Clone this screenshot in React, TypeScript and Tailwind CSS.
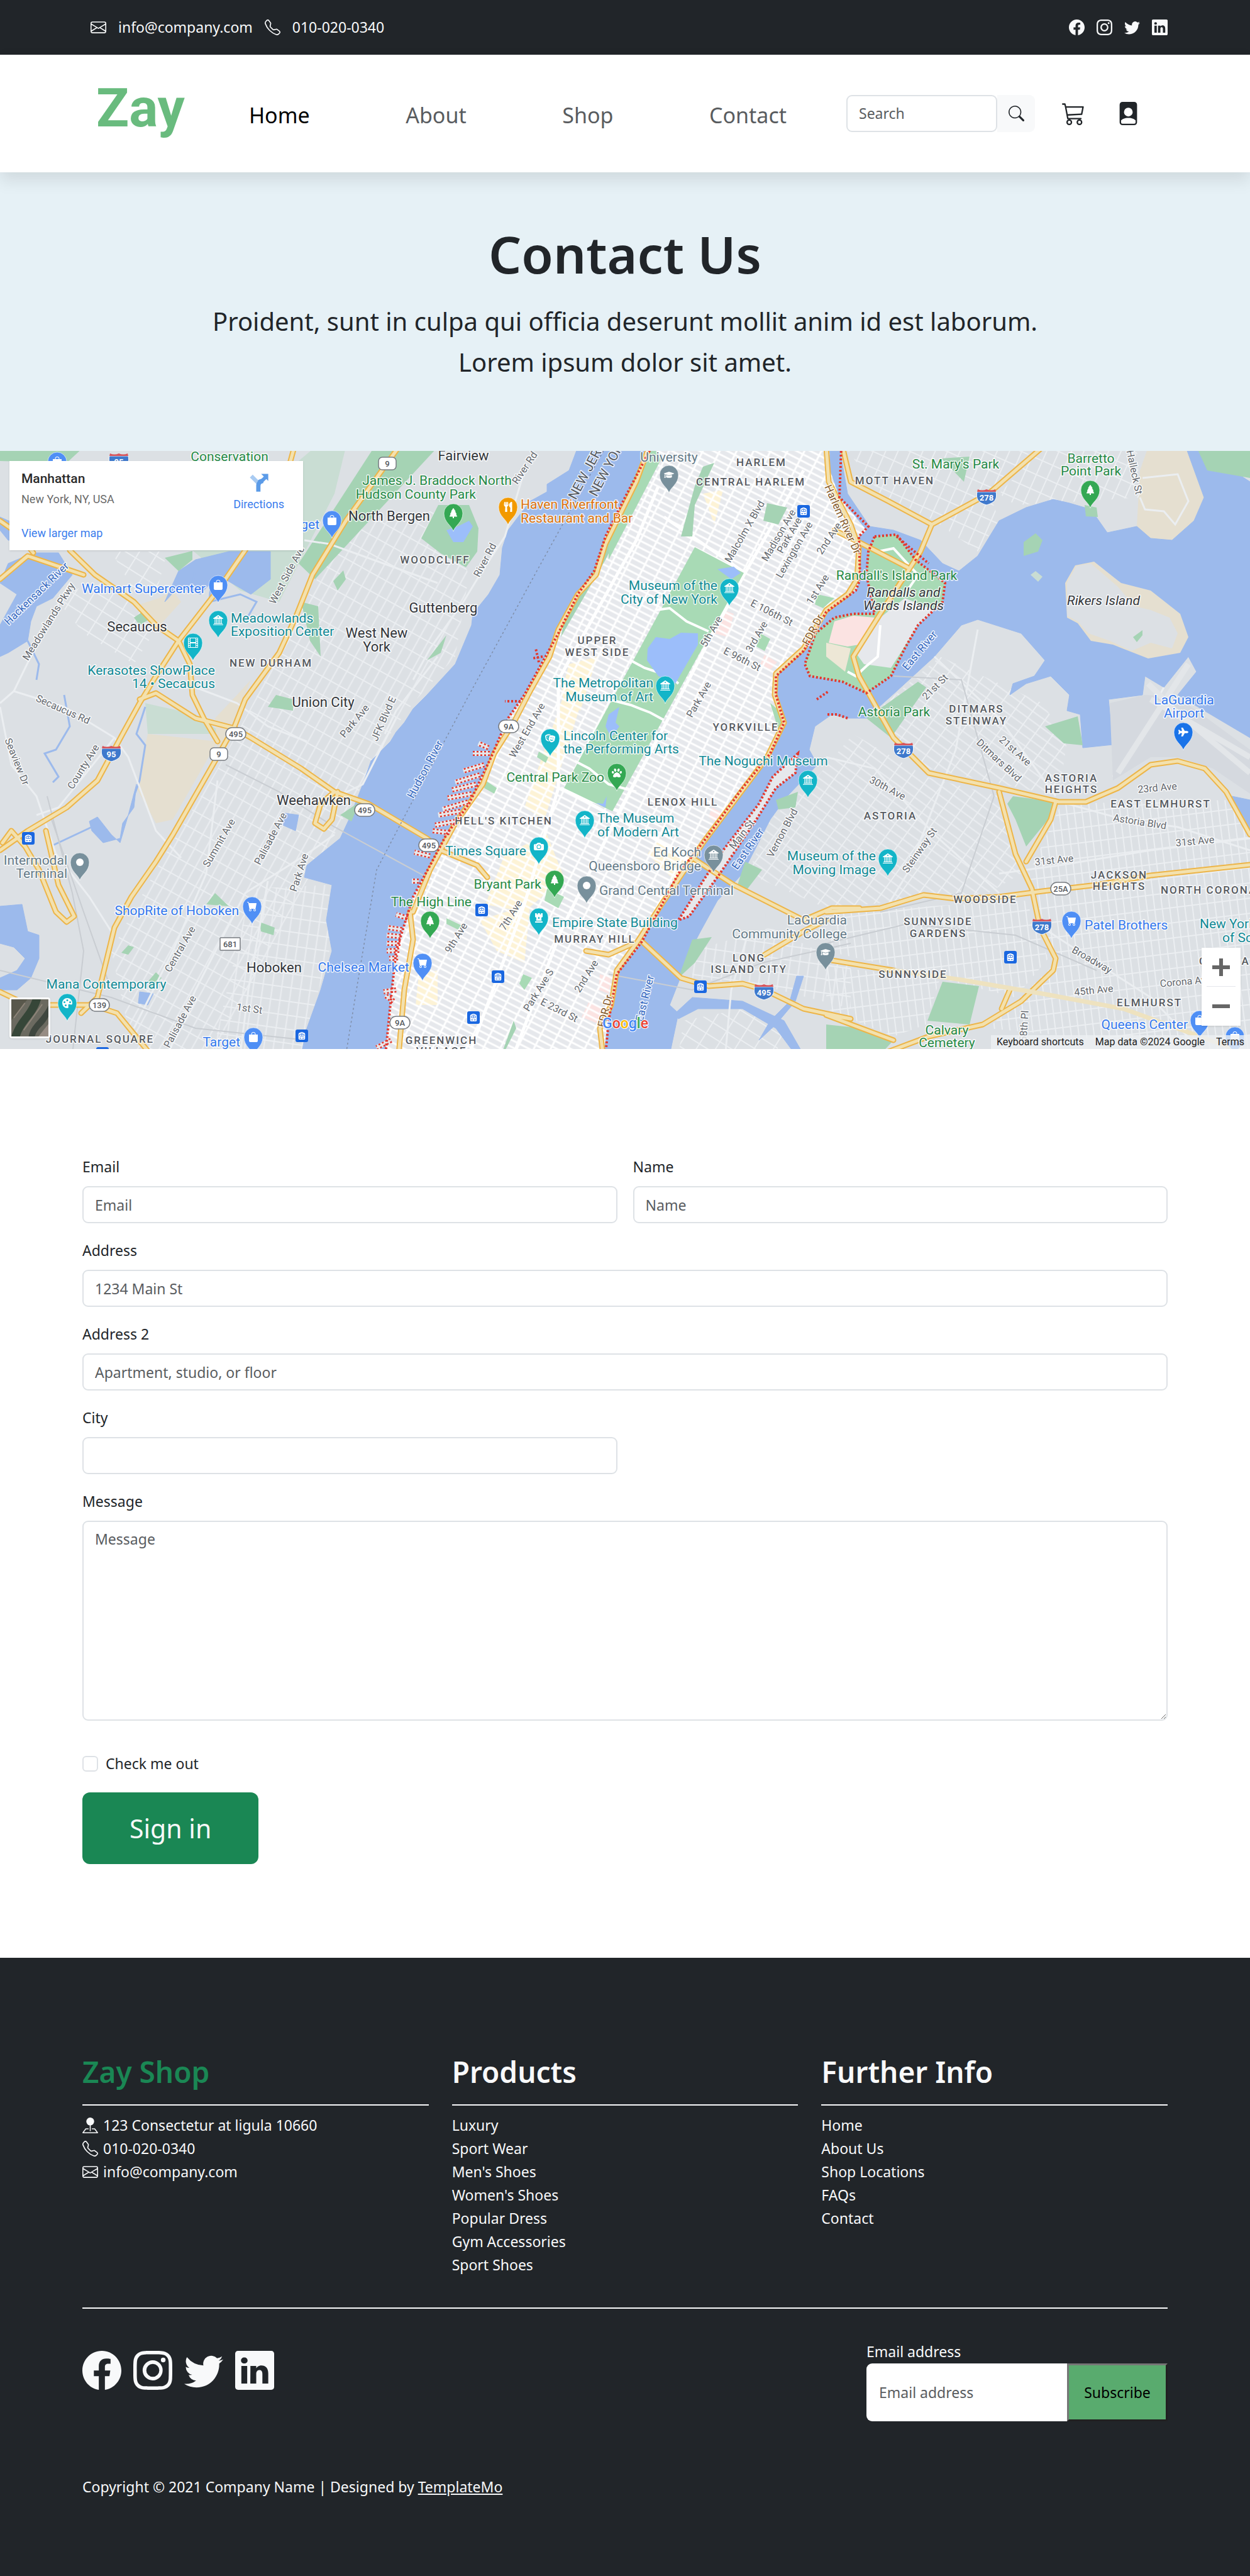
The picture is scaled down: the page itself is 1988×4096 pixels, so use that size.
import React from "react";
import {
  BsBagFill, BsBank2, BsCameraFill, BsCart3, BsCartFill, BsEnvelope, BsFacebook, BsFilePersonFill,
  BsFilm, BsInstagram, BsLinkedin, BsPaletteFill, BsPinMapFill, BsSearch, BsTelephone, BsTrainFrontFill, BsTreeFill,
  BsTwitter,
} from "react-icons/bs";
import { FaChessRook, FaGraduationCap, FaPaw, FaPlane, FaTheaterMasks, FaUtensils } from "react-icons/fa";

/* ---------- Map ---------- */

// The map is described in three survey sheets: west (w), centre (c) and east (e).
const SHEETS: Record<string, [number, number]> = { w: [0, 0.4437], c: [657, 0.4437], e: [1314, 0.4299] };

function place(sheet: string, x: number, y: number): [number, number] {
  const [origin, scale] = SHEETS[sheet];
  return [Math.round(origin + x * scale), Math.round(y * 0.6162 - 6)];
}

function line(source: string) {
  let sheet = "w";
  const out: string[] = [];
  for (const token of source.split(" ")) {
    if (token in SHEETS) sheet = token;
    else {
      const [x, y] = token.split(",").map(Number);
      out.push(place(sheet, x, y).join(","));
    }
  }
  return out.join(" ");
}

const WATER = [
  "c 590,0 560,60 480,95 480,115 420,140 340,215 320,260 310,330 270,380 215,430 210,460 150,560 100,600 50,640 0,675 w 1450,710 1420,735 1400,760 1330,810 1300,870 1250,960 1220,1010 1150,1050 1100,1080 1090,1110 1190,1130 1170,1220 1190,1300 1150,1400 1100,1500 1080,1568 c -100,1568 -80,1420 -60,1300 0,1160 60,1080 120,1000 200,920 280,800 340,700 400,640 460,560 520,480 590,380 650,320 690,230 760,130 860,0",
  "e 12,0 15,60 50,130 150,215 120,230 125,340 110,370 0,425 c 1470,440 1400,525 1300,590 1300,640 1330,710 1280,790 1180,880 1050,1010 950,1100 820,1275 730,1360 700,1480 680,1568 920,1568 950,1460 920,1440 1000,1290 1030,1250 1090,1170 1180,1100 1280,960 1340,900 1450,820 1420,780 1440,720 1500,690 e 80,700 150,700 260,630 400,540 500,460 560,445 720,480 810,550 770,590 690,610 680,640 740,610 830,590 900,640 890,680 940,690 950,775 1060,768 1045,650 1170,640 1180,590 1250,620 1340,540 1370,580 1300,640 1568,750 1568,90 1370,0 1330,0 1397,130 1360,190 1280,240 1200,235 1150,205 1040,220 980,160 900,145 840,135 740,155 640,190 560,280 490,320 430,300 350,240 250,215 160,205 80,120 50,0",
  "w 0,460 60,380 0,350 30,300 120,272 210,272 260,330 190,390 130,410 110,450 100,500 30,530 0,540",
  "w 0,1185 80,1180 100,1250 140,1260 140,1320 110,1370 60,1400 0,1400 0,1370 60,1350 90,1320 50,1290 0,1280",
  "w 590,400 640,320 700,290 820,270 970,270 970,340 900,380 780,330 720,380 640,360",
  "w 320,965 350,955 400,1000 430,1020 460,950 490,870 480,930 440,970 430,1010 370,1020 330,990",
  "w 0,180 60,200 80,240 30,240 0,215",
  "w 1020,945 1070,950 1060,990 1015,975",
  "w 500,1405 550,1410 530,1440 495,1435",
  "c 940,1460 1000,1420 1180,1430 1330,1480 1400,1568 1370,1568 1300,1500 1180,1450 1020,1450 950,1475",
  "e 1500,900 1568,910 1568,1000",
  "c 1280,1480 1350,1430 1375,1365 1400,1365 1370,1430 1300,1490 1240,1530",
];

const PARKS = [
  "w 1340,0 1568,0 1130,340 1070,300",
  "c 30,235 90,150 200,150 235,210 230,270 190,310 100,275",
  "w 590,285 690,268 690,290 640,320",
  "w 1080,400 1140,410 1150,540 1110,500",
  "w 990,640 1050,650 1050,680 960,670",
  "w 1195,345 1230,318 1240,340 1210,370",
  "w 740,1180 770,1150 820,1185",
  "w 930,1225 985,1240 980,1260 935,1250",
  "w 0,0 300,0 240,40 0,36",
  "w 480,440 510,425 535,445 500,460",
  "w 1220,950 1290,915 1260,965",
  "w 435,1305 460,1285 480,1290 460,1310",
  "w 530,1380 560,1355 580,1370 540,1400",
  "c 50,550 120,485 100,530",
  "c 860,0 800,130 690,290 530,490 540,450 640,330 760,130 840,0",
  "c 1010,100 1040,50 1080,40 1010,150 1000,230 960,230",
  "c 1270,145 1340,155 1310,200 1255,190",
  "e 690,900 850,915 820,960 740,1030 700,960 670,920",
  "e 150,700 340,605 370,620 240,750",
  "e 430,1380 565,1390 530,1490 375,1480",
  "e 0,1490 130,1500 250,1530 200,1568 0,1568",
  "e 810,720 930,695 950,770 880,765",
  "e 730,245 775,222 800,240 785,270 730,280",
  "e 1370,0 1568,0 1568,80 1410,60",
  "e 955,150 1000,155 1005,180 960,178",
  "c 1190,1070 1250,1090 1200,1140 1160,1135",
  "c 1000,1270 1070,1265 1010,1330 950,1370",
  "e 425,30 530,25 510,90",
  "c 1300,910 1380,890 1370,930 1310,935",
  "c 300,1600 360,1480 370,1500",
];

const ISLANDS = [
  "e 180,230 260,225 330,290 440,350 430,400 340,460 290,520 240,590 150,635 60,605 -60,590 -80,560 -40,480 30,440 100,430 180,430 150,330 155,270",
  "c 1380,790 1290,850 1240,920 1110,1040 1040,1120 950,1220 990,1210 1100,1100 1230,960 1300,880 1370,840",
];

const HIGHWAYS = [
  "w 1430,0 1240,190 1120,330 1060,440 1000,530 880,650 840,720 770,810 620,1000 560,1070 470,1160 410,1240 350,1420 290,1460",
  "w 1055,0 1020,90 880,266 780,370 640,500 560,590 500,660 440,740 350,860 240,930 100,990 0,1040",
  "w 250,266 340,330 480,400 560,460 640,500 680,560 690,640 730,700 780,760",
  "w 500,650 560,635 700,700 840,725 900,750 1080,830 1200,890 1320,920 1530,1010 c 100,1040 230,1080 265,1110",
  "w 0,340 100,280 300,330",
  "w 0,190 60,220 120,272",
  "w 1210,890 1190,960 1160,985 1130,970 1150,920 1200,890",
  "w 165,990 210,1130 265,1210 240,1225 200,1200 140,1090 90,1030 40,990 10,1020",
  "w 0,1405 100,1440 330,1440 420,1460 540,1568",
  "c 845,0 800,90 690,250 655,330 590,380 520,470 490,540 420,630 360,710 290,790 250,870 150,970 60,1090 0,1200 w 1470,1200 1480,1270 1450,1400 1430,1568",
  "c 1480,0 1490,90 1568,200 e 120,260 115,340 80,380 0,420 c 1480,420 1400,520 1300,585 1295,640 1330,710 1270,800 1040,1020 900,1170 800,1280 730,1350 710,1440 670,1500 680,1568",
  "e 60,0 90,90 230,140 390,200",
  "e 30,215 120,245 300,310",
  "e 800,0 600,120 390,200 350,270 200,430 100,540 120,590 250,750 380,840 640,880 860,915 960,915 1080,880 1200,820 1300,810 1400,830 1480,890 1568,1000",
  "e 640,890 700,1050 760,1140 790,1240 850,1320 840,1350 720,1430 580,1490 380,1520 200,1568",
  "e 850,915 830,960 740,1070",
  "e 0,1200 200,1190 360,1155 480,1165 640,1160 800,1145 1000,1130 1200,1105 1568,1078",
  "c 820,1275 960,1370 1060,1390 1180,1385 1260,1400 1400,1450 1568,1475 e 0,1465 130,1500 250,1530",
  "c 1000,1060 1150,1130 1400,1220 1500,1190 1600,1190",
  "c 1260,1310 1400,1250 1480,1220",
  "c 620,1300 700,1310 790,1280",
  "c 1500,1325 e 20,1325 250,1350",
  "e 650,1450 680,1400",
];

const MINOR = [
  "w 250,350 150,480 50,630 0,660",
  "w 50,630 230,670 410,750 460,800 560,990 650,1060",
  "w 0,670 40,820 130,900 200,1050 320,1160 400,1250",
  "w 410,750 210,930 130,950",
  "w 700,620 850,660 960,720 1100,760",
  "w 1090,240 1180,250 1568,350",
  "w 1200,1000 1100,1050 880,1150 700,1400 600,1568",
  "w 780,860 740,1100 620,1300 480,1500",
  "w 960,1120 890,1400 860,1568",
  "w 1420,700 1300,870 1210,900",
  "w 1568,540 1420,680 1380,740",
  "c 400,60 330,230 240,330 180,400 60,520 0,600",
  "e 0,800 180,830 400,1000 640,1150",
  "e 400,540 640,700 850,900",
  "e 560,470 480,780 300,1100 220,1190",
  "e 640,1100 860,1080 1200,1040 1568,1010",
  "e 890,920 1100,960 1300,980 1568,1040",
  "e 780,1230 1000,1330 1200,1420 1400,1568",
  "e 1160,130 1180,160 1250,165 1290,200 1340,140 1300,70 1170,80",
  "e 1060,850 1140,760 1250,620",
  "c 1120,1560 1140,1400 1200,1260",
];

const SHORES = [
  "c 855,0 760,130 690,230 650,320 590,380 520,480 460,560 400,640 340,700 280,800 200,920 120,1000 60,1080 0,1160 -60,1300 -80,1420 -100,1568",
  "e 55,0 50,130 155,205 120,230 125,340 110,370 0,425 c 1470,440 1400,525 1300,590 1300,640 1330,710 1280,790 1180,880 1050,1010 950,1100 820,1275 730,1360 700,1480 690,1568",
  "c 385,655 330,655", "c 465,540 425,545", "c 450,555 440,520",
  "e -35,650 10,630", "e 5,690 40,690 80,700", "e 260,230 380,300",
];

const PIERS = [
  "c 270,775 235,765", "c 275,790 215,790", "c 255,820 180,835", "c 240,845 150,865", "c 225,870 140,885", "c 210,895 125,905",
  "c 195,915 105,935", "c 170,940 90,950", "c 150,965 80,975", "c 130,995 70,990", "c 60,1055 5,1045", "c 20,1120 -5,1120",
  "c -20,1215 -60,1205", "c -40,1245 -90,1240", "c -45,1262 -95,1260", "c -45,1280 -95,1280", "c -50,1298 -95,1300",
  "c -55,1318 -85,1320", "c -60,1400 -105,1405", "c -70,1430 -100,1415", "c -80,1530 -130,1550",
];

const MANHATTAN =
  "c 860,0 760,130 690,230 650,320 590,380 520,480 460,560 400,640 340,700 280,800 200,920 120,1000 60,1080 0,1160 -60,1300 -80,1420 -100,1568 680,1568 700,1480 730,1360 820,1275 950,1100 1050,1010 1180,880 1280,790 1330,710 1300,640 1300,590 1400,525 1470,440 e 0,425 110,370 125,340 120,230 150,215 50,130 15,60 12,0";

type Label = [sheet: string, x: number, y: number, text: string, kind: string, anchor?: "start" | "middle" | "end", turn?: number];

const LABEL_CLASS: Record<string, string> = {
  town: "text-[22px] fill-[#33363b]",
  area: "text-[17px] font-medium tracking-[2px] fill-[#55595f]",
  road: "text-[16px] fill-[#64686e]",
  shop: "text-[21px] fill-[#3579ee]",
  sight: "text-[21px] fill-[#128a96]",
  park: "text-[21px] fill-[#278a47]",
  grey: "text-[21px] fill-[#647a88]",
  food: "text-[21px] fill-[#dd740a]",
  island: "text-[21px] italic fill-[#33363b]",
  river: "text-[17px] fill-[#3468c0]",
  drive: "text-[17px] fill-[#84592a]",
  state: "text-[21px] fill-[#55595f]",
};

const LABELS: Label[] = [
  ["w", 822, 36, "Conservation", "park", "middle"],
  ["w", 1567, 98, "James J. Braddock North", "park", "middle"],
  ["w", 1706, 133, "Hudson County Park", "park", "end"],
  ["w", 1395, 190, "North Bergen", "town", "middle"],
  ["w", 1560, 300, "WOODCLIFF", "area", "middle"],
  ["w", 1145, 211, "Target", "shop", "end"],
  ["w", 738, 377, "Walmart Supercenter", "shop", "end"],
  ["w", 827, 452, "Meadowlands", "sight"],
  ["w", 827, 487, "Exposition Center", "sight"],
  ["w", 492, 476, "Secaucus", "town", "middle"],
  ["w", 1350, 492, "West New", "town", "middle"],
  ["w", 1350, 527, "York", "town", "middle"],
  ["w", 770, 587, "Kerasotes ShowPlace", "sight", "end"],
  ["w", 770, 622, "14 • Secaucus", "sight", "end"],
  ["w", 972, 566, "NEW DURHAM", "area", "middle"],
  ["w", 1158, 670, "Union City", "town", "middle"],
  ["w", 1125, 923, "Weehawken", "town", "middle"],
  ["w", 242, 1077, "Intermodal", "grey", "end"],
  ["w", 242, 1112, "Terminal", "grey", "end"],
  ["w", 857, 1207, "ShopRite of Hoboken", "shop", "end"],
  ["w", 982, 1355, "Hoboken", "town", "middle"],
  ["w", 1468, 1353, "Chelsea Market", "shop", "end"],
  ["w", 380, 1398, "Mana Contemporary", "sight", "middle"],
  ["w", 358, 1537, "JOURNAL SQUARE", "area", "middle"],
  ["w", 862, 1546, "Target", "shop", "end"],
  ["w", 140, 385, "Hackensack River", "river", "middle", -44],
  ["w", 185, 455, "Meadowlands Pkwy", "road", "middle", -58],
  ["w", 1040, 335, "West Side Ave", "road", "middle", -62],
  ["w", 220, 685, "Secaucus Rd", "road", "middle", 24],
  ["w", 50, 815, "Seaview Dr", "road", "middle", 68],
  ["w", 308, 830, "County Ave", "road", "middle", -58],
  ["w", 1280, 712, "Park Ave", "road", "middle", -50],
  ["w", 1385, 705, "JFK Blvd E", "road", "middle", -66],
  ["w", 795, 1025, "Summit Ave", "road", "middle", -60],
  ["w", 980, 1015, "Palisade Ave", "road", "middle", -62],
  ["w", 1085, 1100, "Park Ave", "road", "middle", -72],
  ["w", 655, 1300, "Central Ave", "road", "middle", -60],
  ["w", 655, 1487, "Palisade Ave", "road", "middle", -62],
  ["w", 893, 1458, "1st St", "road", "middle", 8],
  ["w", 1535, 835, "Hudson River", "river", "middle", -62],
  ["c", 180, 34, "Fairview", "town", "middle"],
  ["c", 108, 427, "Guttenberg", "town", "middle"],
  ["c", 385, 159, "Haven Riverfront", "food"],
  ["c", 385, 194, "Restaurant and Bar", "food"],
  ["c", 918, 37, "University", "grey", "middle"],
  ["c", 1248, 49, "HARLEM", "area", "middle"],
  ["c", 1210, 99, "CENTRAL HARLEM", "area", "middle"],
  ["c", 1090, 369, "Museum of the", "sight", "end"],
  ["c", 1090, 404, "City of New York", "sight", "end"],
  ["c", 660, 508, "UPPER", "area", "middle"],
  ["c", 660, 538, "WEST SIDE", "area", "middle"],
  ["c", 860, 620, "The Metropolitan", "sight", "end"],
  ["c", 860, 655, "Museum of Art", "sight", "end"],
  ["c", 1192, 732, "YORKVILLE", "area", "middle"],
  ["c", 538, 756, "Lincoln Center for", "sight"],
  ["c", 538, 791, "the Performing Arts", "sight"],
  ["c", 685, 864, "Central Park Zoo", "park", "end"],
  ["c", 1256, 821, "The Noguchi Museum", "sight", "middle"],
  ["c", 967, 925, "LENOX HILL", "area", "middle"],
  ["c", 325, 973, "HELL'S KITCHEN", "area", "middle"],
  ["c", 660, 969, "The Museum", "sight"],
  ["c", 660, 1004, "of Modern Art", "sight"],
  ["c", 406, 1054, "Times Square", "sight", "end"],
  ["c", 1032, 1057, "Ed Koch", "grey", "end"],
  ["c", 1032, 1092, "Queensboro Bridge", "grey", "end"],
  ["c", 460, 1140, "Bryant Park", "park", "end"],
  ["c", 667, 1155, "Grand Central Terminal", "grey"],
  ["c", 210, 1185, "The High Line", "park", "end"],
  ["c", 497, 1238, "Empire State Building", "sight"],
  ["c", 652, 1279, "MURRAY HILL", "area", "middle"],
  ["c", 1556, 1232, "LaGuardia", "grey", "end"],
  ["c", 1556, 1267, "Community College", "grey", "end"],
  ["c", 1204, 1327, "LONG", "area", "middle"],
  ["c", 1204, 1357, "ISLAND CITY", "area", "middle"],
  ["c", 102, 1540, "GREENWICH", "area", "middle"],
  ["c", 102, 1568, "VILLAGE", "area", "middle"],
  ["c", 650, 48, "NEW JERSEY", "state", "middle", -62],
  ["c", 712, 55, "NEW YORK", "state", "middle", -62],
  ["c", 410, 58, "River Rd", "road", "middle", -56],
  ["c", 268, 295, "River Rd", "road", "middle", -62],
  ["c", 1200, 222, "Malcolm X Blvd", "road", "middle", -60],
  ["c", 1320, 232, "Madison Ave", "road", "middle", -60],
  ["c", 1360, 232, "Park Ave", "road", "middle", -60],
  ["c", 1376, 270, "Lexington Ave", "road", "middle", -60],
  ["c", 1500, 240, "2nd Ave", "road", "middle", -56],
  ["c", 1460, 372, "1st Ave", "road", "middle", -58],
  ["c", 1280, 435, "E 106th St", "road", "middle", 27],
  ["c", 1175, 555, "E 96th St", "road", "middle", 27],
  ["c", 1080, 480, "5th Ave", "road", "middle", -60],
  ["c", 1242, 494, "3rd Ave", "road", "middle", -60],
  ["c", 1035, 656, "Park Ave", "road", "middle", -60],
  ["c", 420, 735, "West End Ave", "road", "middle", -60],
  ["c", 1445, 475, "FDR Dr", "drive", "middle", -62],
  ["c", 700, 1458, "FDR Dr", "drive", "middle", -76],
  ["c", 1188, 1005, "Main St", "road", "middle", -52],
  ["c", 1210, 1042, "East River", "river", "middle", -55],
  ["c", 842, 1425, "East River", "river", "middle", -76],
  ["c", 1335, 1000, "Vernon Blvd", "road", "middle", -62],
  ["c", 165, 1270, "9th Ave", "road", "middle", -58],
  ["c", 360, 1212, "7th Ave", "road", "middle", -58],
  ["c", 460, 1405, "Park Ave S", "road", "middle", -58],
  ["c", 630, 1370, "2nd Ave", "road", "middle", -58],
  ["c", 518, 1460, "E 23rd St", "road", "middle", 27],
  ["e", 50, 190, "Harlem River Dr", "drive", "middle", 66],
  ["e", 253, 96, "MOTT HAVEN", "area", "middle"],
  ["e", 480, 55, "St. Mary's Park", "park", "middle"],
  ["e", 980, 40, "Barretto", "park", "middle"],
  ["e", 980, 73, "Point Park", "park", "middle"],
  ["e", 1128, 67, "Halleck St", "road", "middle", 78],
  ["e", 260, 343, "Randall's Island Park", "park", "middle"],
  ["e", 286, 387, "Randalls and", "island", "middle"],
  ["e", 286, 421, "Wards Islands", "island", "middle"],
  ["e", 1025, 407, "Rikers Island", "island", "middle"],
  ["e", 355, 530, "East River", "river", "middle", -50],
  ["e", 252, 695, "Astoria Park", "park", "middle"],
  ["e", 412, 625, "21st St", "road", "middle", -45],
  ["e", 556, 685, "DITMARS", "area", "middle"],
  ["e", 556, 715, "STEINWAY", "area", "middle"],
  ["e", 690, 790, "21st Ave", "road", "middle", 42],
  ["e", 630, 815, "Ditmars Blvd", "road", "middle", 43],
  ["e", 1323, 663, "LaGuardia", "shop", "middle"],
  ["e", 1323, 698, "Airport", "shop", "middle"],
  ["e", 908, 863, "ASTORIA", "area", "middle"],
  ["e", 908, 893, "HEIGHTS", "area", "middle"],
  ["e", 1225, 888, "23rd Ave", "road", "middle", -5],
  ["e", 1238, 930, "EAST ELMHURST", "area", "middle"],
  ["e", 1158, 975, "Astoria Blvd", "road", "middle", 9],
  ["e", 1365, 1025, "31st Ave", "road", "middle", -5],
  ["e", 845, 1075, "31st Ave", "road", "middle", -6],
  ["e", 222, 888, "30th Ave", "road", "middle", 28],
  ["e", 238, 960, "ASTORIA", "area", "middle"],
  ["e", 183, 1067, "Museum of the", "sight", "end"],
  ["e", 183, 1102, "Moving Image", "sight", "end"],
  ["e", 355, 1045, "Steinway St", "road", "middle", -55],
  ["e", 1085, 1113, "JACKSON", "area", "middle"],
  ["e", 1085, 1143, "HEIGHTS", "area", "middle"],
  ["e", 1238, 1153, "NORTH CORONA", "area"],
  ["e", 588, 1176, "WOODSIDE", "area", "middle"],
  ["e", 415, 1234, "SUNNYSIDE", "area", "middle"],
  ["e", 415, 1264, "GARDENS", "area", "middle"],
  ["e", 955, 1245, "Patel Brothers", "shop"],
  ["e", 1382, 1242, "New York Hall", "sight"],
  ["e", 1465, 1277, "of Science", "sight"],
  ["e", 1380, 1335, "CORONA", "area"],
  ["e", 978, 1330, "Broadway", "road", "middle", 30],
  ["e", 322, 1369, "SUNNYSIDE", "area", "middle"],
  ["e", 990, 1410, "45th Ave", "road", "middle", -6],
  ["e", 1330, 1388, "Corona Ave", "road", "middle", -5],
  ["e", 1195, 1442, "ELMHURST", "area", "middle"],
  ["e", 1337, 1501, "Queens Center", "shop", "end"],
  ["e", 446, 1516, "Calvary", "park", "middle"],
  ["e", 446, 1548, "Cemetery", "park", "middle"],
  ["e", 745, 1495, "58th Pl", "road", "middle", -86],
];

type IconType = React.ComponentType<{ x?: number; y?: number; size?: number; color?: string }>;

const BLUE = "#4f8ff5";
const TEAL = "#13b5c8";
const GREEN = "#34a853";
const SLATE = "#78909c";

const PINS: [string, number, number, string, IconType | null][] = [
  ["w", 204, 85, BLUE, BsBagFill],
  ["w", 1190, 236, BLUE, BsBagFill],
  ["w", 782, 402, BLUE, BsBagFill],
  ["w", 782, 494, TEAL, BsBank2],
  ["w", 691, 552, TEAL, BsFilm],
  ["w", 287, 1118, SLATE, null],
  ["w", 904, 1232, BLUE, BsCartFill],
  ["w", 242, 1482, TEAL, BsPaletteFill],
  ["w", 908, 1570, BLUE, BsBagFill],
  ["w", 1514, 1377, BLUE, BsCartFill],
  ["c", 145, 217, GREEN, BsTreeFill],
  ["c", 340, 201, "#f29900", FaUtensils],
  ["c", 918, 119, SLATE, FaGraduationCap],
  ["c", 1134, 411, TEAL, BsBank2],
  ["c", 904, 662, TEAL, BsBank2],
  ["c", 492, 798, TEAL, FaTheaterMasks],
  ["c", 730, 888, GREEN, FaPaw],
  ["c", 1416, 905, TEAL, BsBank2],
  ["c", 615, 1010, TEAL, BsBank2],
  ["c", 451, 1078, TEAL, BsCameraFill],
  ["c", 1078, 1098, SLATE, BsBank2],
  ["c", 507, 1163, GREEN, BsTreeFill],
  ["c", 622, 1178, SLATE, null],
  ["c", 61, 1269, GREEN, BsTreeFill],
  ["c", 451, 1261, TEAL, FaChessRook],
  ["c", 1479, 1351, SLATE, FaGraduationCap],
  ["e", 976, 157, GREEN, BsTreeFill],
  ["e", 1321, 783, "#1a73e8", FaPlane],
  ["e", 228, 1109, TEAL, BsBank2],
  ["e", 908, 1269, BLUE, BsCartFill],
  ["e", 1382, 1525, BLUE, BsBagFill],
  ["e", 1512, 1568, BLUE, BsBagFill],
];

const SHIELDS: [string, number, number, string, "state" | "interstate" | "box"][] = [
  ["w", 1388, 43, "9", "state"], ["w", 845, 740, "495", "state"], ["w", 785, 792, "9", "state"],
  ["w", 1308, 936, "495", "state"], ["w", 1538, 1028, "495", "state"], ["w", 356, 1440, "139", "state"],
  ["w", 1433, 1485, "9A", "state"], ["c", 343, 720, "9A", "state"], ["e", 867, 1139, "25A", "state"],
  ["w", 825, 1282, "681", "box"], ["w", 399, 790, "95", "interstate"], ["w", 427, 35, "95", "interstate"],
  ["c", 1257, 1405, "495", "interstate"], ["e", 593, 128, "278", "interstate"],
  ["e", 287, 783, "278", "interstate"], ["e", 797, 1236, "278", "interstate"],
];

const STATIONS: [string, number, number][] = [
  ["w", 102, 1010], ["w", 1082, 1519], ["w", 368, 1565], ["c", 1399, 165], ["c", 245, 1195],
  ["c", 305, 1366], ["c", 217, 1472], ["c", 1029, 1393], ["e", 681, 1316],
];

function Pin({ x, y, color, icon: Icon }: { x: number; y: number; color: string; icon: IconType | null }) {
  return (
    <g transform={`translate(${x} ${y})`}>
      <path d="M0 0C-2-9-15-14-15-29A15 15 0 0 1 15-29C15-14 2-9 0 0Z" fill={color} stroke="#fff" strokeOpacity=".6" />
      {Icon ? <Icon x={-8} y={-37} size={16} color="#fff" /> : <circle cy={-29} r={6} fill="#fff" />}
    </g>
  );
}

function Shield({ x, y, text, kind }: { x: number; y: number; text: string; kind: string }) {
  if (kind === "interstate")
    return (
      <g transform={`translate(${x} ${y})`}>
        <path d="M-15-8H15C18 6 10 10 0 13C-10 10-18 6-15-8Z" fill="#3f79cc" stroke="#fff" />
        <path d="M-14-12Q-7-9 0-12Q7-9 14-12L15-8H-15Z" fill="#d8545a" />
        <text y={6} textAnchor="middle" className="text-[13px] font-bold fill-white">{text}</text>
      </g>
    );
  const half = text.length > 1 ? 16 : 14;
  return (
    <g transform={`translate(${x} ${y})`}>
      <rect x={-half} y={-10} width={half * 2} height={20} rx={kind === "box" ? 1 : text.length > 1 ? 10 : 6} fill="#fff" stroke="#777b80" strokeWidth={1.5} />
      <text y={5} textAnchor="middle" className="text-[13px] font-medium fill-[#55595e]">{text}</text>
    </g>
  );
}

function Grid({ id, turn, w, h, color, stroke }: { id: string; turn: number; w: number; h: number; color: string; stroke: number }) {
  return (
    <pattern id={id} width={w} height={h} patternUnits="userSpaceOnUse" patternTransform={`rotate(${turn})`}>
      <path d={`M0 ${h / 2}H${w}M${w / 2} 0V${h}`} stroke={color} strokeWidth={stroke} fill="none" />
    </pattern>
  );
}

const BLOCKS: [string, string][] = [
  ["gridJersey", "w 1240,200 c 100,160 200,330 150,540 0,660 w 1400,740 1200,1000 1100,1120 760,1568 480,1568 400,1300 560,1090 780,830 880,700 1130,350"],
  ["gridHoboken", "w 900,1140 1180,1130 1180,1300 1080,1568 760,1568"],
  ["gridSecaucus", "w 210,400 330,340 470,400 560,470 480,560 300,480"],
  ["gridSecaucus", "w 400,270 600,270 560,380 480,370"],
  ["gridBronx", "e 70,0 780,0 600,110 640,190 560,270 400,190 200,120"],
  ["gridBronx", "e 800,0 1150,0 1160,130 950,140 700,150 640,120"],
  ["gridAstoria", "e 420,540 800,660 890,760 860,900 380,830 170,690"],
  ["gridAstoria", "c 1450,850 e 100,740 370,850 640,900 720,1100 600,1150 0,1190 c 1200,1100 1280,960"],
  ["gridQueens", "e 870,920 1500,910 1568,1020 1568,1568 600,1500 850,1330 750,1100"],
  ["gridQueens", "e 30,1200 740,1170 820,1320 700,1420 250,1340 0,1300"],
  ["gridQueens", "e 0,1340 420,1370 370,1490 250,1520 0,1450"],
  ["gridHoboken", "c 1000,1300 1280,1240 1568,1340 1568,1450 1260,1390 1000,1370"],
  ["gridSecaucus", "c 970,1480 1180,1450 1330,1500 1300,1568 950,1568"],
];

function MapDrawing() {
  const text = (l: Label, i: number) => {
    const [x, y] = place(l[0], l[1], l[2]);
    return (
      <text key={i} x={x} y={y} textAnchor={l[5] ?? "start"} transform={l[6] ? `rotate(${l[6]} ${x} ${y})` : undefined}
        className={`${LABEL_CLASS[l[4]]} stroke-white/80 stroke-3 [paint-order:stroke] [stroke-linejoin:round]`}>
        {l[3]}
      </text>
    );
  };
  return (
    <svg viewBox="0 0 1988 951" role="img" aria-label="Map of Manhattan" className="block w-full font-[Roboto,sans-serif]">
      <defs>
        <Grid id="gridManhattan" turn={27} w={24} h={10} color="#fff" stroke={3} />
        <Grid id="gridJersey" turn={29} w={15} h={26} color="#ebeef1" stroke={2} />
        <Grid id="gridHoboken" turn={8} w={15} h={22} color="#ebeef1" stroke={2} />
        <Grid id="gridSecaucus" turn={32} w={26} h={20} color="#ebeef1" stroke={2} />
        <Grid id="gridBronx" turn={24} w={18} h={24} color="#ebeef1" stroke={2} />
        <Grid id="gridAstoria" turn={36} w={24} h={13} color="#ebeef1" stroke={2} />
        <Grid id="gridQueens" turn={-7} w={12} h={24} color="#ebeef1" stroke={2} />
      </defs>
      <rect width={1988} height={951} fill="#dce0e4" />
      <g fill="#c9ddd3">
        <polygon points={line("w 690,266 1130,0 1240,0 1200,120 1000,400 860,370")} />
        <polygon points={line("w 520,660 700,690 800,740 530,740")} />
      </g>
      <g fill="#e5dfd0">
        <polygon points={line("w 530,740 780,760 620,960 560,970 490,880")} />
        <polygon points={line("e 1190,0 1330,0 1397,130 1360,190 1280,240 1200,235 1150,205 1160,60")} />
        <polygon points={line("w 570,390 620,370 650,400 560,470 480,410")} />
        <polygon points={line("w 850,640 900,600 780,800 770,700")} />
      </g>
      {BLOCKS.map(([id, p], i) => <polygon key={i} points={line(p)} fill={`url(#${id})`} />)}
      <g fill="#9cbaec" stroke="#9cbaec" strokeLinejoin="round">
        {WATER.map((p) => <polygon key={p} points={line(p)} />)}
      </g>
      <g fill="none" stroke="#9cbaec" strokeWidth={3}>
        <polyline points={line("w 520,670 490,740 520,770 500,860 480,900")} />
        <polyline points={line("w 100,500 140,560 130,600")} />
        <polyline points={line("w 230,640 250,720 200,780 160,790 210,850 190,865")} />
        <polyline points={line("w 640,340 700,300 690,370 760,320 750,400 860,380 920,400 880,450")} />
        <polyline points={line("w 330,980 180,1030")} />
      </g>
      <polygon points={line(MANHATTAN)} fill="#e6e8ec" />
      <g fill="#fdf3d6">
        <polygon points={line("c 880,1010 1000,1060 940,1120 840,1050")} />
        <polygon points={line("c 330,1050 480,1000 540,1110 400,1200 260,1180")} />
        <polygon points={line("c 240,1220 420,1180 400,1330 300,1300")} />
        <polygon points={line("c 560,560 660,540 600,680 530,640")} />
        <polygon points={line("c 1040,120 1110,110 1080,200")} />
        <polygon points={line("w 1500,1360 1568,1350 1568,1440 1490,1440")} />
        <polygon points={line("c 560,600 620,620 470,960 400,930")} />
      </g>
      <g fill="#fbe3e2">
        <polygon points={line("c 1110,420 1150,430 1130,490 1080,480")} />
        <polygon points={line("c 1260,535 1305,555 1280,575 1245,560")} />
        <polygon points={line("c 670,1360 710,1370 700,1410 665,1400")} />
        <polygon points={line("c 630,1430 680,1450 670,1490 605,1470")} />
        <polygon points={line("c 1070,930 1110,945 1090,970 1060,955")} />
      </g>
      <polygon points={line(MANHATTAN)} fill="url(#gridManhattan)" />
      <g fill="none" stroke="#fff" strokeWidth={5}>
        <polyline points={line("c 900,180 1190,325 740,940 520,880 520,600 800,240 880,100")} />
        <polyline points={line("c 520,880 400,1180 200,1568")} />
        <polyline points={line("c 1190,325 1400,60")} />
        <polyline points={line("c 740,940 530,1250 360,1568")} />
        <polyline points={line("c 530,880 840,1000 1020,1080")} />
      </g>
      <g fill="#a5d3b4">
        {PARKS.map((p) => <polygon key={p} points={line(p)} />)}
      </g>
      <g fill="#a8dab5">
        <polygon points={line("c 1010,258 1185,325 715,940 540,880")} />
        <polygon points={line("c 700,230 860,0 890,30 700,290")} />
        <polygon points={line("c 480,1140 540,1160 520,1190 470,1170")} />
        <polygon points={line("c 260,860 300,880 290,895 255,880")} />
        <polygon points={line("c 120,1215 175,1235 160,1245 120,1230")} />
        <polygon points={line("c 395,1360 425,1370 400,1400 382,1385")} />
        <polygon points={line("c 450,785 485,800 475,815 445,800")} />
        <polygon points={line("c 1245,480 1280,495 1260,525 1230,515")} />
        <polygon points={line("c 1450,380 1510,390 1470,415 1440,405")} />
        <polygon points={line("c 1280,660 1330,690 1310,730")} />
      </g>
      <g fill="none" stroke="#fff" strokeWidth={4}>
        <polyline points={line("c 870,420 920,415 980,450 1060,475")} />
        <polyline points={line("c 780,550 830,570 920,590 950,610")} />
        <polyline points={line("c 700,650 780,665 850,685 900,705")} />
        <polyline points={line("c 580,810 630,830 700,870 800,890")} />
      </g>
      <g fill="#9cbefa">
        <polygon points={line("c 870,490 920,495 960,478 1020,480 1020,510 940,610 880,590 838,550 840,520")} />
        <polygon points={line("c 690,720 700,690 740,670 725,710 740,720 710,750")} />
        <polygon points={line("c 1090,315 1150,308 1175,325 1140,340")} />
        <polygon points={line("c 655,918 680,920 695,900 690,930")} />
        <polygon points={line("c 120,215 160,205 200,190 215,205 180,245 145,245")} />
      </g>
      <polygon points={line("e 990,295 1090,350 1200,370 1310,430 1340,490 1310,530 1190,545 1060,510 980,500 930,455 890,440 885,350 920,305")} fill="#e5dfd0" />
      <polygon points={line("e 980,300 1080,360 1140,410 1200,420 1270,440 1300,480 1280,520 1200,505 1130,525 1050,500 970,480 930,450 890,435 890,350 925,307")} fill="#dce0e4" />
      <polygon points={line("e 1135,490 1170,472 1170,485 1150,503")} fill="#a5d3b4" />
      <polygon points={line("e 755,330 775,320 800,335 785,348")} fill="#c9ddd3" />
      <g fill="none" stroke="#ebeef1" strokeWidth={3}>
        {MINOR.map((p) => <polyline key={p} points={line(p)} />)}
      </g>
      <g fill="none" stroke="#c9cdd2" strokeWidth={2}>
        <polyline points={line("w 170,900 260,1150 300,1300 260,1568")} />
        <polyline points={line("w 185,960 300,1200 400,1400")} />
        <polyline points={line("w 810,820 1000,890 1200,980 1530,1110")} />
        <polyline points={line("w 0,1350 400,1420 700,1500 1100,1530")} />
        <polyline points={line("e 200,1200 500,1150 620,900 500,600 250,590")} />
        <polyline points={line("e 0,1280 300,1230 700,1260 1000,1350")} />
        <polyline points={line("c 700,1360 1000,1400 1250,1330 1568,1280")} />
      </g>
      {ISLANDS.map((p, i) => <polygon key={p} points={line(p)} fill={i ? "#e6e8ec" : "#a8dab5"} />)}
      <polygon points={line("e 200,440 290,390 400,420 340,460 240,570 140,560 110,530")} fill="#e6e8ec" />
      <polygon points={line("e 30,450 100,435 180,440 120,510 80,515 10,505")} fill="#fbe3e2" />
      <polygon points={line("e 0,505 90,520 70,580 0,540")} fill="#ede7d6" />
      <g fill="none" stroke="#fff" strokeWidth={4}>
        <polyline points={line("e 190,270 250,262 300,300 340,330 300,370")} />
        <polyline points={line("e 200,460 190,540 150,565 110,590 80,580")} />
      </g>
      <polygon points={line("e 1050,660 1180,640 1300,645 1568,780 1568,895 1430,830 1300,800 1200,800 1060,860")} fill="#d5d9df" />
      <g fill="none" stroke="#e3e6e9" strokeWidth={9}>
        <polyline points={line("e 1080,840 1340,560")} />
        <polyline points={line("e 1200,650 1568,800")} />
        <polyline points={line("e 1190,610 1290,680 1568,840")} />
      </g>
      <g fill="none" strokeLinejoin="round" strokeLinecap="round">
        <g stroke="#edb548" strokeWidth={9}>
          {HIGHWAYS.map((p) => <polyline key={p} points={line(p)} />)}
        </g>
        <g stroke="#f3e1ae" strokeWidth={5}>
          {HIGHWAYS.map((p) => <polyline key={p} points={line(p)} />)}
        </g>
        <polyline points={line("e 250,1350 500,1375 800,1410 1100,1450 1568,1568")} stroke="#eee2bf" strokeWidth={7} />
      </g>
      <g fill="none" strokeWidth={8} stroke="#e6e8ec">
        {PIERS.map((p) => <polyline key={p} points={line(p)} />)}
      </g>
      <g fill="none" strokeWidth={8} stroke="#e2382e" strokeDasharray="3 3">
        {PIERS.map((p) => <polyline key={p} points={line(p)} />)}
      </g>
      <g fill="none" strokeWidth={3} stroke="#e6e8ec">
        {PIERS.map((p) => <polyline key={p} points={line(p)} />)}
      </g>
      <g fill="none" stroke="#e2382e" strokeWidth={4} strokeDasharray="3 3">
        {SHORES.map((p) => <polyline key={p} points={line(p)} />)}
        {ISLANDS.map((p) => <polygon key={p} points={line(p)} />)}
      </g>
      <g fill="none" stroke="#7f8ea8" strokeDasharray="3 4" strokeWidth={1.5}>
        <polyline points={line("c 690,0 450,310 200,640 0,910 w 1350,1090 1290,1350 1240,1568")} />
      </g>
      {SHIELDS.map(([s, x, y, t, k], i) => {
        const [px, py] = place(s, x, y);
        return <Shield key={i} x={px} y={py} text={t} kind={k} />;
      })}
      {STATIONS.map(([s, x, y], i) => {
        const [px, py] = place(s, x, y);
        return (
          <g key={i} transform={`translate(${px} ${py})`}>
            <rect x={-10} y={-10} width={20} height={20} rx={3} fill="#1a67e0" />
            <BsTrainFrontFill x={-6} y={-6} size={12} color="#fff" />
          </g>
        );
      })}
      {LABELS.map(text)}
      {PINS.map(([s, x, y, color, icon], i) => {
        const [px, py] = place(s, x, y);
        return <Pin key={i} x={px} y={py} color={color} icon={icon} />;
      })}
      <text x={958} y={918} className="text-[23px] font-medium stroke-white stroke-2 [paint-order:stroke]">
        <tspan fill="#4285f4">G</tspan><tspan fill="#ea4335">o</tspan><tspan fill="#fbbc05">o</tspan>
        <tspan fill="#4285f4">g</tspan><tspan fill="#34a853">l</tspan><tspan fill="#ea4335">e</tspan>
      </text>
    </svg>
  );
}

function MapSection() {
  return (
    <section className="relative overflow-hidden font-[Roboto,sans-serif]">
      <MapDrawing />
      <div className="absolute left-[15px] top-[16px] flex h-[142px] w-[467px] justify-between bg-white pl-[19px] pr-[30px] pt-[14px] shadow">
        <div className="flex flex-col items-start">
          <h2 className="text-[21px] font-medium leading-[28px] text-[#2b2b2b]">Manhattan</h2>
          <p className="mt-[6px] text-[18px] leading-[26px] text-[#6b6b6b]">New York, NY, USA</p>
          <a href="#map" className="mt-[28px] text-[18px] leading-[26px] text-[#3b7ded]">View larger map</a>
        </div>
        <a href="#directions" className="flex flex-col items-center pt-[2px] text-[18px] leading-[26px] text-[#3b7ded]">
          <svg viewBox="0 0 32 32" className="size-[36px]" aria-hidden="true">
            <path d="M12 29V20Q12 12 19 11L22 10V17Q18 17 18 21V29Z" fill="#5b9be8" />
            <path d="M19 4H29V14Z" fill="#5b9be8" />
            <path d="M18 16L26 8" stroke="#5b9be8" strokeWidth="5" />
            <path d="M3 9L7 5L15 13L12 18Z" fill="#a9cbf2" />
          </svg>
          <span className="mt-[4px]">Directions</span>
        </a>
      </div>
      <button type="button" aria-label="Show satellite imagery" className="absolute bottom-[17px] left-[15px] size-[65px] overflow-hidden rounded-sm border-3 border-white bg-[#4d5248] shadow">
        <svg viewBox="0 0 60 60" className="size-full" aria-hidden="true">
          <rect width="60" height="60" fill="#6b6a60" />
          <path d="M0 60C10 30 25 25 34 0H48C40 28 22 36 14 60Z" fill="#364638" />
          <path d="M28 60C32 40 48 34 60 10V28C54 42 42 46 38 60Z" fill="#3f473f" />
          <path d="M0 0H26L0 34Z" fill="#59584c" />
          <path d="M44 60L60 40V60Z" fill="#978c84" />
          <path d="M20 50L50 8M4 30L22 6" stroke="#8d8478" strokeWidth="2" />
        </svg>
      </button>
      <div className="absolute bottom-[37px] right-[15px] flex w-[62px] flex-col divide-y divide-gray-200 bg-white px-[8px] text-[#666] shadow">
        <button type="button" aria-label="Zoom in" className="flex h-[62px] items-center justify-center">
          <svg viewBox="0 0 28 28" className="size-[28px]" aria-hidden="true"><path d="M14 0V28M0 14H28" stroke="currentColor" strokeWidth="6" /></svg>
        </button>
        <button type="button" aria-label="Zoom out" className="flex h-[62px] items-center justify-center">
          <svg viewBox="0 0 28 28" className="size-[28px]" aria-hidden="true"><path d="M0 14H28" stroke="currentColor" strokeWidth="6" /></svg>
        </button>
      </div>
      <div className="absolute bottom-0 right-0 flex gap-[18px] bg-[#eef0f2]/80 px-[9px] text-[16px] leading-[22px] text-[#222]">
        <button type="button">Keyboard shortcuts</button>
        <span>Map data ©2024 Google</span>
        <a href="#terms">Terms</a>
      </div>
    </section>
  );
}

/* ---------- Page ---------- */

const SOCIAL = [
  { name: "Facebook", Icon: BsFacebook },
  { name: "Instagram", Icon: BsInstagram },
  { name: "Twitter", Icon: BsTwitter },
  { name: "LinkedIn", Icon: BsLinkedin },
];

function TopBar() {
  return (
    <div className="bg-[#212529] px-[131px] text-[#f8f9fa]">
      <div className="flex h-[87px] items-center justify-between pl-[13px]">
        <div className="flex items-center gap-[19px]">
          <BsEnvelope className="size-[25px]" />
          <a href="mailto:info@company.com">info@company.com</a>
          <BsTelephone className="size-[25px]" />
          <a href="tel:010-020-0340">010-020-0340</a>
        </div>
        <div className="flex gap-[19px]">
          {SOCIAL.map(({ name, Icon }) => (
            <a key={name} href="#social" aria-label={name}><Icon className="size-[25px]" /></a>
          ))}
        </div>
      </div>
    </div>
  );
}

function Header() {
  return (
    <header className="relative z-10 flex h-[187px] items-center bg-white pl-[153px] pr-[175px] shadow-[0_12px_25px_rgba(0,0,0,0.10)]">
      <a href="#home" className="pb-[18px] font-[Roboto,sans-serif] text-[86px] font-bold leading-[100px] text-[#69bb7e]">Zay</a>
      <nav className="ml-[102px] mr-[95px] flex flex-1 justify-between pt-[4px] text-[34px] leading-[54px] text-[#595c5f]">
        <a href="#home" className="text-black">Home</a>
        <a href="#about">About</a>
        <a href="#shop">Shop</a>
        <a href="#contact">Contact</a>
      </nav>
      <form className="flex h-[59px] w-[300px]">
        <input type="search" aria-label="Search" placeholder="Search" className="min-w-0 flex-1 rounded-[9px] border-2 border-[#dee2e6] px-[18px] placeholder:text-[#595c5f]" />
        <button type="button" aria-label="Submit search" className="flex w-[60px] items-center justify-center rounded-r-[9px] bg-[#f8f9fa] text-[#212529]">
          <BsSearch className="size-[25px]" />
        </button>
      </form>
      <a href="#cart" aria-label="Cart" className="ml-[43px]"><BsCart3 className="size-[37px]" /></a>
      <a href="#account" aria-label="Account" className="ml-[50px]"><BsFilePersonFill className="size-[37px]" /></a>
    </header>
  );
}

function Field({ id, label, placeholder, type = "text", full }: { id: string; label: string; placeholder?: string; type?: string; full?: boolean }) {
  return (
    <div className={full ? "col-span-2" : ""}>
      <label htmlFor={id} className="mb-[12px] block">{label}</label>
      <input id={id} type={type} placeholder={placeholder} className="block h-[59px] w-full rounded-[9px] border-2 border-[#dee2e6] bg-white px-[18px] placeholder:text-[#595c5f]" />
    </div>
  );
}

function ContactForm() {
  return (
    <form className="px-[131px] pb-[149px] pt-[169px]">
      <div className="grid grid-cols-2 gap-[25px]">
        <Field id="email" label="Email" placeholder="Email" type="email" />
        <Field id="name" label="Name" placeholder="Name" />
        <Field id="address" label="Address" placeholder="1234 Main St" full />
        <Field id="address2" label="Address 2" placeholder="Apartment, studio, or floor" full />
        <Field id="city" label="City" />
        <div className="col-span-2">
          <label htmlFor="message" className="mb-[12px] block">Message</label>
          <textarea id="message" placeholder="Message" className="block h-[318px] w-full rounded-[9px] border-2 border-[#dee2e6] px-[18px] py-[9px] placeholder:text-[#595c5f]" />
        </div>
      </div>
      <div className="mt-[50px] flex items-center gap-[12px]">
        <input id="check" type="checkbox" className="size-[25px] appearance-none rounded-[6px] border-2 border-[#dee2e6] checked:bg-[#198754]" />
        <label htmlFor="check">Check me out</label>
      </div>
      <button type="button" className="mt-[27px] h-[114px] rounded-[12px] bg-[#1a8754] px-[75px] text-[41px] leading-[62px] text-[#f8f9fa]">Sign in</button>
    </form>
  );
}

function FooterColumn({ title, green, children }: { title: string; green?: boolean; children: React.ReactNode }) {
  return (
    <div>
      <h2 className={`border-b-2 border-[#f8f9fa] pb-[24px] text-[46px] font-semibold leading-[56px] ${green ? "text-[#1a8754]" : "text-[#f8f9fa]"}`}>{title}</h2>
      <ul className="mt-[13px]">{children}</ul>
    </div>
  );
}

function Footer() {
  return (
    <footer className="flex-1 bg-[#212529] px-[131px] pb-[118px] pt-[153px] text-[#f8f9fa]">
      <div className="grid grid-cols-3 gap-[37px]">
        <FooterColumn title="Zay Shop" green>
          <li className="flex items-center gap-[8px]"><BsPinMapFill className="size-[25px]" />123 Consectetur at ligula 10660</li>
          <li className="flex items-center gap-[8px]"><BsTelephone className="size-[25px]" /><a href="tel:010-020-0340">010-020-0340</a></li>
          <li className="flex items-center gap-[8px]"><BsEnvelope className="size-[25px]" /><a href="mailto:info@company.com">info@company.com</a></li>
        </FooterColumn>
        <FooterColumn title="Products">
          {["Luxury", "Sport Wear", "Men's Shoes", "Women's Shoes", "Popular Dress", "Gym Accessories", "Sport Shoes"].map((t) => (
            <li key={t}><a href="#products">{t}</a></li>
          ))}
        </FooterColumn>
        <FooterColumn title="Further Info">
          {["Home", "About Us", "Shop Locations", "FAQs", "Contact"].map((t) => (
            <li key={t}><a href="#info">{t}</a></li>
          ))}
        </FooterColumn>
      </div>
      <hr className="mt-[49px] border-t-2 border-[#f8f9fa]" />
      <div className="mt-[50px] flex items-start justify-between">
        <div className="mt-[17px] flex gap-[19px]">
          {SOCIAL.map(({ name, Icon }) => (
            <a key={name} href="#social" aria-label={name}><Icon className="size-[62px]" /></a>
          ))}
        </div>
        <form className="w-[479px]">
          <label htmlFor="newsletter" className="block">Email address</label>
          <div className="flex h-[92px]">
            <input id="newsletter" type="email" placeholder="Email address" className="min-w-0 flex-1 rounded-l-[9px] bg-white px-[20px] text-[#212529] placeholder:text-[#595c5f]" />
            <button type="button" className="w-[160px] border-3 border-b-[#212121] border-l-[#767676] border-r-[#212121] border-t-[#767676] bg-[#59ab6e] text-black">Subscribe</button>
          </div>
        </form>
      </div>
      <p className="mt-[86px]">
        Copyright © 2021 Company Name | Designed by <a href="#templatemo" className="underline">TemplateMo</a>
      </p>
    </footer>
  );
}

export default function App() {
  return (
    <div className="flex min-h-screen flex-col bg-white font-['Noto_Sans',sans-serif] text-[23px] leading-[37px] text-[#212529]">
      <TopBar />
      <Header />
      <section className="bg-[#e6f1f6] px-[131px] pb-[109px] pt-[81px] text-center">
        <h1 className="text-[82px] font-semibold leading-[96px]">Contact Us</h1>
        <p className="mx-auto mt-[27px] max-w-[1400px] text-[40px] leading-[65px]">
          Proident, sunt in culpa qui officia deserunt mollit anim id est laborum. Lorem ipsum dolor sit amet.
        </p>
      </section>
      <MapSection />
      <ContactForm />
      <Footer />
    </div>
  );
}
